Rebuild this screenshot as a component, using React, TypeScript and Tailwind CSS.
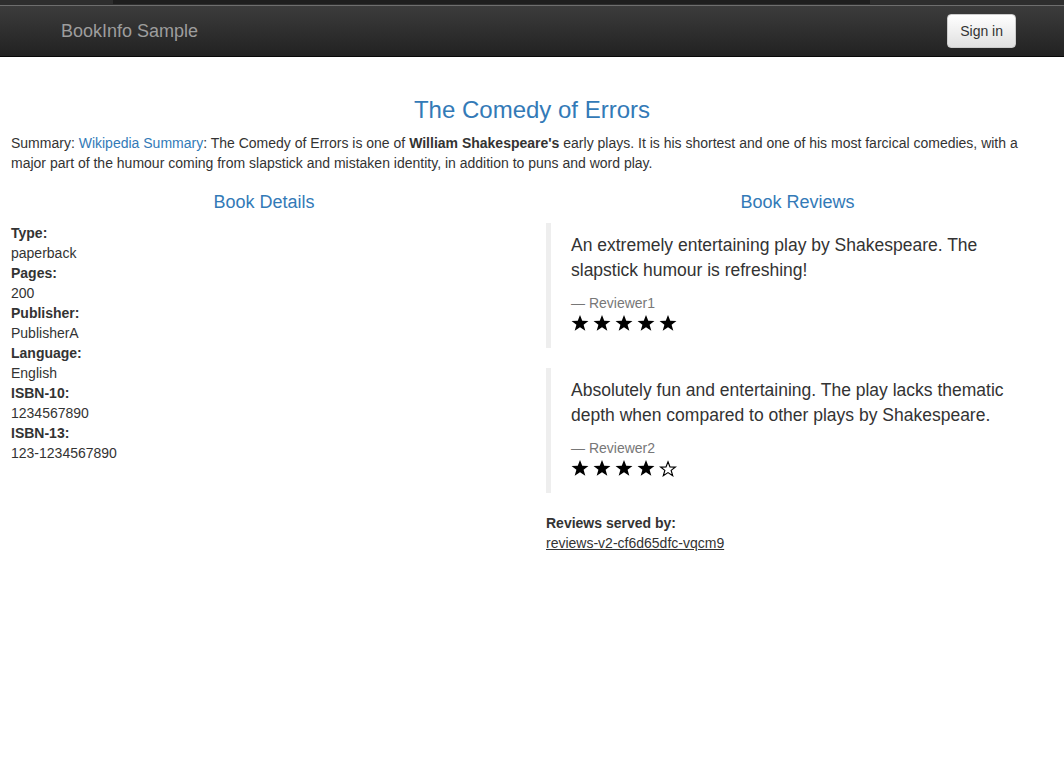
import React from 'react';

const details = [
  { label: 'Type:', value: 'paperback' },
  { label: 'Pages:', value: '200' },
  { label: 'Publisher:', value: 'PublisherA' },
  { label: 'Language:', value: 'English' },
  { label: 'ISBN-10:', value: '1234567890' },
  { label: 'ISBN-13:', value: '123-1234567890' },
];

const reviews = [
  {
    text: 'An extremely entertaining play by Shakespeare. The slapstick humour is refreshing!',
    reviewer: 'Reviewer1',
    rating: 5,
  },
  {
    text: 'Absolutely fun and entertaining. The play lacks thematic depth when compared to other plays by Shakespeare.',
    reviewer: 'Reviewer2',
    rating: 4,
  },
];

const STAR_POINTS = '10,1.2 12.5,7.6 19.4,7.8 14,12 15.9,18.7 10,14.8 4.1,18.7 6,12 0.6,7.8 7.5,7.6';

function Star({ filled }: { filled: boolean }) {
  return (
    <svg width="18" height="18" viewBox="0 0 20 20" aria-hidden="true">
      {filled ? (
        <polygon points={STAR_POINTS} fill="#000" />
      ) : (
        <g transform="translate(10 10) scale(0.88) translate(-10 -9)">
          <polygon points={STAR_POINTS} fill="#fff" stroke="#000" strokeWidth="1.5" strokeLinejoin="miter" />
        </g>
      )}
    </svg>
  );
}

function Stars({ rating }: { rating: number }) {
  return (
    <div className="flex h-[25px] items-start gap-[4px] pt-[1px]">
      {[1, 2, 3, 4, 5].map((i) => (
        <Star key={i} filled={i <= rating} />
      ))}
    </div>
  );
}

export default function App() {
  return (
    <div className="min-h-[772px] bg-white text-[14px] leading-[20px] text-[#333] font-['Liberation_Sans',Arial,sans-serif]">
      {/* bottom edge of the previous frame */}
      <div className="flex h-[5px] bg-[#2e2e2e]">
        <div className="ml-[113px] h-[4px] w-[757px] bg-[#1e1e1e]" />
      </div>
      <div className="h-px bg-[#6e6e6e]" />

      {/* Navbar */}
      <nav className="flex h-[51px] items-center justify-between border-b border-[#080808] bg-gradient-to-b from-[#3c3c3c] to-[#222] pl-[61px] pr-[48px]">
        <span className="text-[18px] text-[#9d9d9d]">BookInfo Sample</span>
        <button className="h-[34px] rounded-[4px] border border-[#ccc] bg-gradient-to-b from-white to-[#e0e0e0] px-[12px] text-[14px] text-[#333]">
          Sign in
        </button>
      </nav>

      <main className="px-[11px]">
        <h3 className="mt-[40px] text-center text-[24px] leading-[26px] text-[#337ab7]">The Comedy of Errors</h3>
        <p className="mt-[10px]">
          Summary: <span className="text-[#337ab7]">Wikipedia Summary</span>: The Comedy of Errors is one of{' '}
          <b>William Shakespeare's</b> early plays. It is his shortest and one of his most farcical comedies, with a
          major part of the humour coming from slapstick and mistaken identity, in addition to puns and word play.
        </p>

        <div className="-mx-[11px] mt-[19px] grid grid-cols-2">
          {/* Book details */}
          <section className="pl-[11px] pr-[15px]">
            <h4 className="text-center text-[18px] leading-[20px] text-[#337ab7]">Book Details</h4>
            <dl className="mt-[11px]">
              {details.map((d) => (
                <div key={d.label}>
                  <dt className="font-bold">{d.label}</dt>
                  <dd>{d.value}</dd>
                </div>
              ))}
            </dl>
          </section>

          {/* Book reviews */}
          <section className="pl-[14px] pr-[15px]">
            <h4 className="text-center text-[18px] leading-[20px] text-[#337ab7]">Book Reviews</h4>
            <div className="mt-[11px]">
              {reviews.map((r) => (
                <blockquote key={r.reviewer} className="mb-[20px] border-l-[5px] border-[#eee] pb-[10px] pl-[20px] pr-[20px] pt-[10px]">
                  <p className="text-[17.5px] leading-[25px]">{r.text}</p>
                  <div className="mt-[10px] text-[#777]">— {r.reviewer}</div>
                  <Stars rating={r.rating} />
                </blockquote>
              ))}
              <div className="font-bold">Reviews served by:</div>
              <span className="underline">reviews-v2-cf6d65dfc-vqcm9</span>
            </div>
          </section>
        </div>
      </main>
    </div>
  );
}
